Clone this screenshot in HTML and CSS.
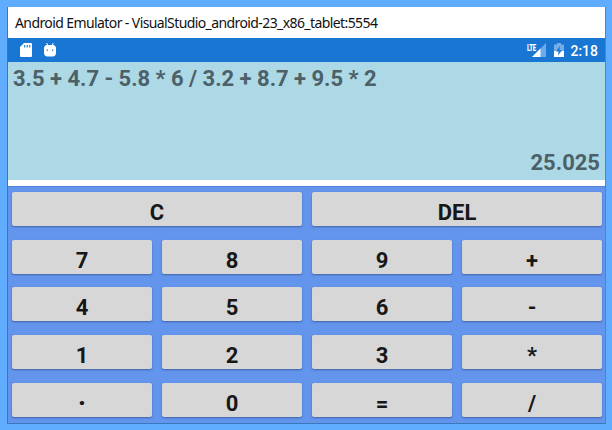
FILE: index.html
```html
<!DOCTYPE html>
<html lang="en">
<head>
<meta charset="utf-8">
<title>Android Emulator</title>
<link rel="stylesheet" href="styles.css">
</head>
<body>
<main class="window">
  <header class="titlebar"><span class="title">Android Emulator - VisualStudio_android-23_x86_tablet:5554</span></header>
  <div class="statusbar">
    <svg class="sd" width="12" height="14" viewBox="0 0 12 14"><path fill="#fff" d="M4 0h7a1 1 0 0 1 1 1v12a1 1 0 0 1-1 1H1a1 1 0 0 1-1-1V4z"/><path stroke="#1976d2" stroke-width="1.1" d="M4.7 2v2.5M7.2 2v2.5M9.7 2v2.5"/></svg>
    <svg class="bot" width="12" height="14" viewBox="0 0 12 14"><path stroke="#fff" stroke-width="1" d="M2.7 0l1.2 2.5M9.3 0L8.1 2.5"/><path fill="#fff" d="M2.5 2h7Q12 2.500 12 5.500v4Q12 13.500 8.500 13.500h-5Q0 13.500 0 9.500v-4Q0 2.500 2.500 2z"/><path fill="#1976d2" d="M2.700 6.500h1.300v1.300H2.700zM8 6.500h1.300v1.300H8z"/></svg>
    <span class="spacer"></span>
    <span class="lte">LTE</span>
    <svg class="signal" width="15" height="14" viewBox="0 0 15 14"><path fill="#6faaea" d="M15 0v14H1z"/><path fill="#fff" d="M9.500 5.500V14H1z"/></svg>
    <svg class="battery" width="10" height="14" viewBox="0 0 10 14"><path fill="#76ade8" d="M3 0h4v1.500h3V8H0V1.500h3z"/><path fill="#fff" d="M0 8h10v6H0z"/><path fill="#1976d2" d="M6 3L2 8.500h2.500L4 12.500 8 7.200H5.500z"/></svg>
    <span class="clock">2:18</span>
  </div>
  <section class="display">
    <div class="expression">3.5 + 4.7 - 5.8 * 6 / 3.2 + 8.7 + 9.5 * 2</div>
    <div class="result">25.025</div>
  </section>
  <section class="keypad">
    <button class="key wide">C</button><button class="key wide">DEL</button>
    <button class="key">7</button><button class="key">8</button><button class="key">9</button><button class="key">+</button>
    <button class="key">4</button><button class="key">5</button><button class="key">6</button><button class="key">-</button>
    <button class="key">1</button><button class="key">2</button><button class="key">3</button><button class="key">*</button>
    <button class="key point">·</button><button class="key">0</button><button class="key">=</button><button class="key">/</button>
  </section>
</main>
</body>
</html>
```
FILE: styles.css
```css
* { box-sizing: border-box; }
body {
  margin: 0;
  height: 430px;
  padding: 7px 6px 6px 7px;
  background: #60adff;
  font-family: Roboto, "Liberation Sans", sans-serif;
  overflow: hidden;
}
.window {
  height: 417px;
  display: flex;
  flex-direction: column;
  border: 1px solid #3878bd;
  border-top: 0;
  border-right-color: #4a83d4;
  background: #fff;
}
.titlebar {
  height: 31px;
  padding-left: 7px;
  display: flex;
  align-items: center;
  color: #111;
  font: 14px/31px "Noto Sans", "Open Sans", sans-serif;
  white-space: nowrap;
}
.title { letter-spacing: -0.595px; }
.statusbar {
  height: 24px;
  display: flex;
  align-items: center;
  padding: 0 7px 0 12px;
  background: #1976d2;
  color: #fff;
}
.bot { margin-left: 12px; }
.spacer { flex: 1; }
.lte {
  align-self: flex-start;
  width: 12px;
  margin-top: 6px;
  font: 900 9px/8px Roboto, sans-serif;
  letter-spacing: -0.4px;
  transform: scaleX(.66);
  transform-origin: left;
}
.signal { margin-left: -8px; }
.battery { margin: 0 6px 0 8px; }
.clock { padding-top: 1px; font-size: 14px; line-height: 24px; font-weight: 500; }
.display {
  height: 118px;
  padding: 3px 5px 4px;
  display: flex;
  flex-direction: column;
  justify-content: space-between;
  background: #add8e6;
  color: #4c6067;
  font-size: 22px;
  line-height: 27px;
  font-weight: 700;
}
.expression { white-space: nowrap; letter-spacing: -0.02px; }
.result { text-align: right; }
.keypad {
  flex: 1;
  margin-top: 6px;
  padding: 5px 3px 6px 4px;
  border-top: 1px solid #5285da;
  display: grid;
  grid-template-columns: repeat(4, 140px);
  grid-template-rows: repeat(5, 34px);
  column-gap: 10px;
  row-gap: 13.7px;
  background: #6495ed;
}
.key {
  border: 0;
  border-radius: 2px;
  padding: 7px 0 0;
  background: #d7d7d7;
  box-shadow: 0 1px 2px rgba(30, 50, 100, .5);
  color: #171717;
  font: 700 22px/27px Roboto, sans-serif;
}
.wide { grid-column: span 2; }
.point { padding-top: 6px; font-size: 28px; line-height: 24px; }
```
